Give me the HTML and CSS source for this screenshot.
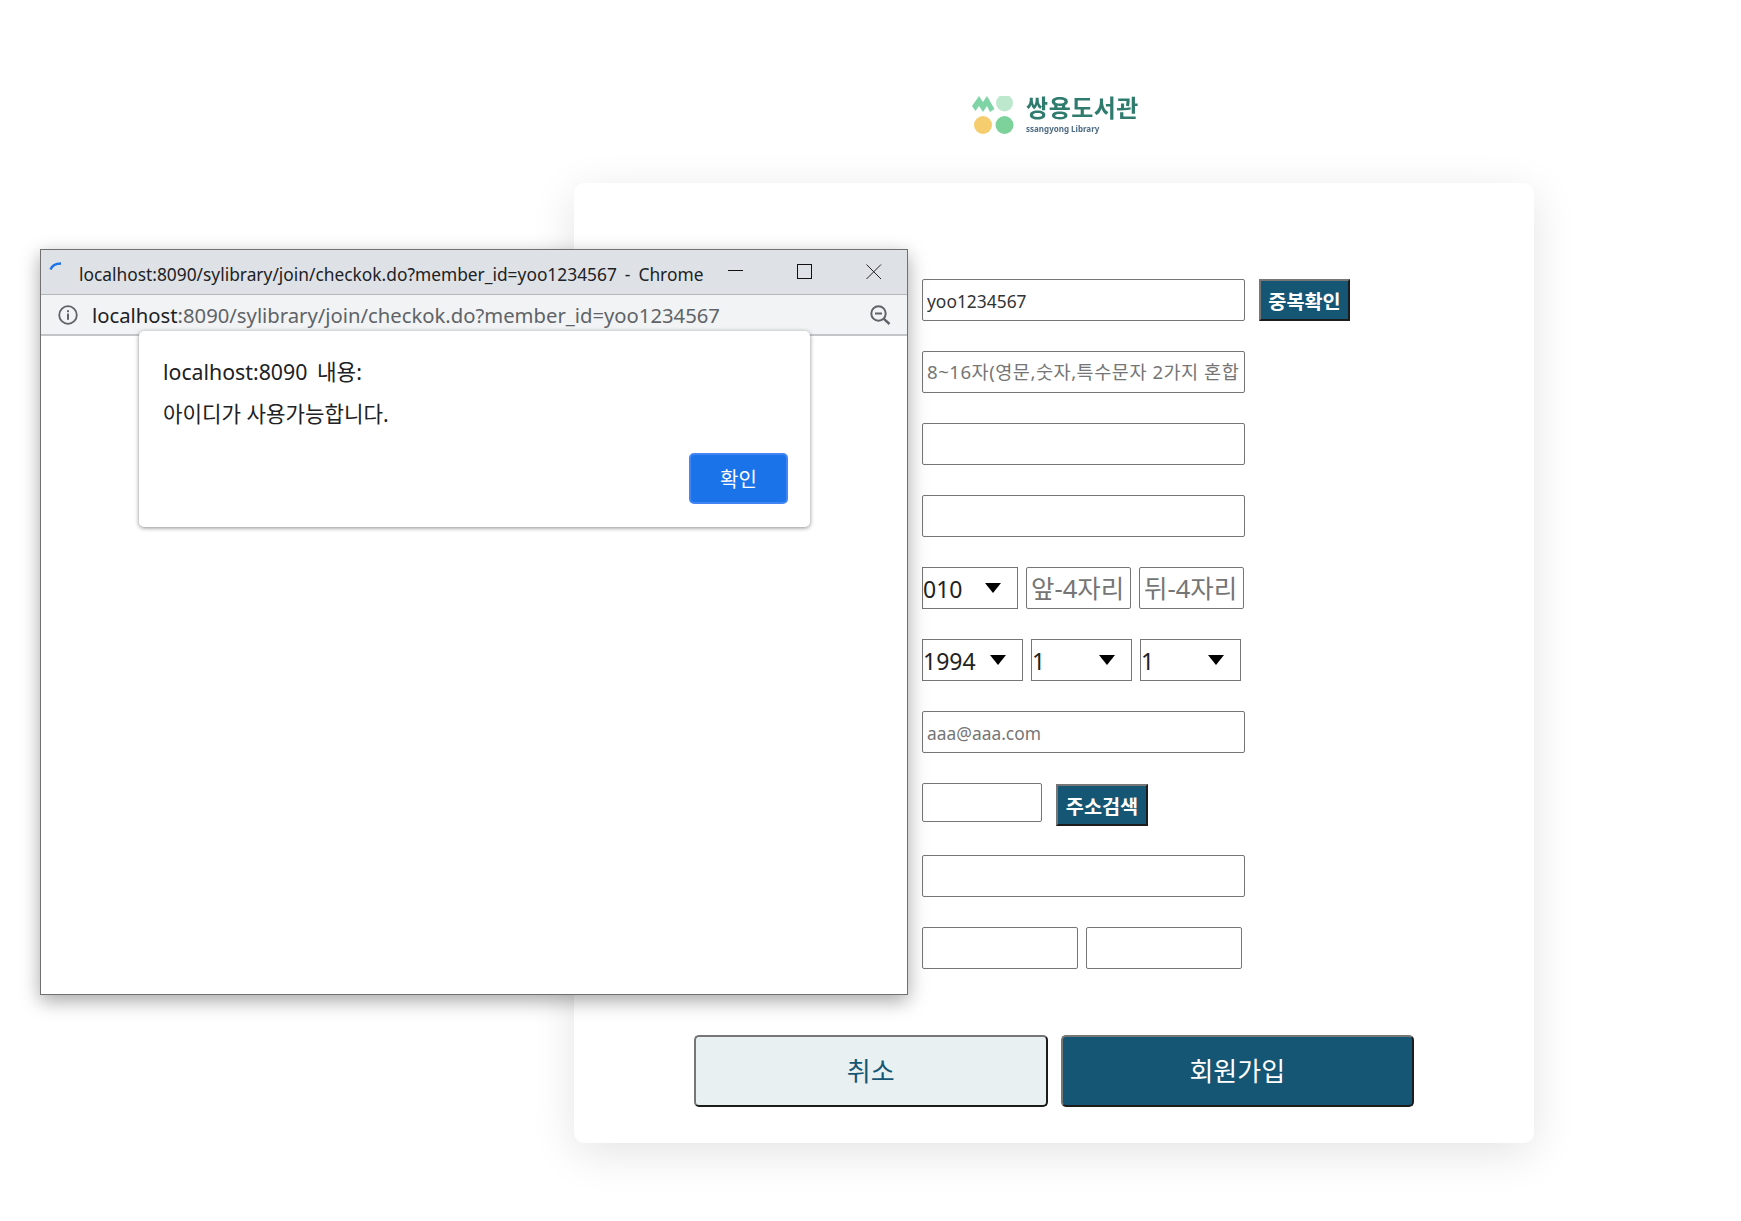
FILE: index.html
```html
<!DOCTYPE html>
<html lang="ko">
    <head>
        <meta charset="utf-8">
        <title>쌍용도서관 회원가입</title>
        <link rel="stylesheet" href="styles.css">
    </head>
    <body>
        <div class="page">
            <div class="logo">
                <svg class="logo-mark" width="54" height="46" viewBox="0 0 54 46">
                    <path d="M0 10 L7 0 L11 6 L15 0 L22.5 13 L18 16 L15 10 L11 16 L7 10 L3.5 15 Z" fill="#7fd4a6"/>
                    <circle cx="32.5" cy="7" r="8.5" fill="#bde8cd"/>
                    <circle cx="11" cy="29" r="9" fill="#f5cd6f"/>
                    <circle cx="32.5" cy="29" r="9" fill="#7dd29c"/>
                </svg>
                <div class="logo-text">
                    <div class="logo-name">쌍용도서관</div>
                    <div class="logo-sub">ssangyong Library</div>
                </div>
            </div>

            <form class="card">
                <div class="row gap-14">
                    <input class="w-full" type="text" value="yoo1234567">
                    <button class="btn-small" type="button">중복확인</button>
                </div>
                <div class="row">
                    <input class="w-full hangul-ph" type="password" placeholder="8~16자(영문,숫자,특수문자 2가지 혼합)">
                </div>
                <div class="row">
                    <input class="w-full" type="password">
                </div>
                <div class="row">
                    <input class="w-full" type="text">
                </div>
                <div class="row gap-8">
                    <div class="sel w-96"><select><option>010</option></select></div>
                    <input class="big w-105" type="text" placeholder="앞-4자리">
                    <input class="big w-105" type="text" placeholder="뒤-4자리">
                </div>
                <div class="row gap-8">
                    <div class="sel w-101"><select><option>1994</option></select></div>
                    <div class="sel w-101"><select><option>1</option></select></div>
                    <div class="sel w-101"><select><option>1</option></select></div>
                </div>
                <div class="row">
                    <input class="w-full" type="text" placeholder="aaa@aaa.com">
                </div>
                <div class="row gap-14">
                    <input class="w-120" type="text">
                    <button class="btn-small btn-addr" type="button">주소검색</button>
                </div>
                <div class="row">
                    <input class="w-full" type="text">
                </div>
                <div class="row gap-9">
                    <input class="w-155" type="text">
                    <input class="w-155" type="text">
                </div>
                <div class="actions">
                    <button class="btn-big btn-cancel" type="button">취소</button>
                    <button class="btn-big btn-join" type="button">회원가입</button>
                </div>
            </form>
        </div>

        <!-- 팝업 창 -->
        <div class="popup">
            <div class="popup-title">
                <svg class="spinner" width="14" height="9" viewBox="0 0 14 9">
                    <path d="M1.5 7.5 C3 3.5 7 1.5 12 1.5" fill="none" stroke="#1a73e8" stroke-width="2.4"/>
                </svg>
                <span class="popup-title-text">localhost:8090/sylibrary/join/checkok.do?member_id=yoo1234567&nbsp; -&nbsp; Chrome</span>
                <svg class="win-btn win-min" width="16" height="16" viewBox="0 0 16 16">
                    <path d="M0 6.5 H15" stroke="#111" stroke-width="1"/>
                </svg>
                <svg class="win-btn win-max" width="16" height="16" viewBox="0 0 16 16">
                    <rect x="0.5" y="0.5" width="14" height="14" fill="none" stroke="#111"/>
                </svg>
                <svg class="win-btn win-close" width="16" height="16" viewBox="0 0 16 16">
                    <path d="M0.5 0.5 L15 15 M15 0.5 L0.5 15" stroke="#222" stroke-width="1"/>
                </svg>
            </div>
            <div class="popup-address">
                <svg width="20" height="20" viewBox="0 0 20 20">
                    <circle cx="10" cy="10" r="8.8" fill="none" stroke="#5f6368" stroke-width="1.8"/>
                    <rect x="9" y="8.6" width="2" height="6.2" fill="#5f6368"/>
                    <rect x="9" y="5.2" width="2" height="2" fill="#5f6368"/>
                </svg>
                <span class="popup-url"><b>localhost</b>:8090/sylibrary/join/checkok.do?member_id=yoo1234567</span>
                <svg class="zoom-icon" width="21" height="20" viewBox="0 0 21 20">
                    <circle cx="8.5" cy="8.5" r="7.2" fill="none" stroke="#5f6368" stroke-width="2"/>
                    <path d="M5 8.5 H12" stroke="#5f6368" stroke-width="2"/>
                    <path d="M13.6 13.6 L19.5 19" stroke="#5f6368" stroke-width="2.4"/>
                </svg>
            </div>
            <div class="popup-body"></div>

            <div class="dialog">
                <div class="dialog-title">localhost:8090 내용:</div>
                <div class="dialog-msg">아이디가 사용가능합니다.</div>
                <div class="dialog-foot">
                    <button class="btn-ok" type="button">확인</button>
                </div>
            </div>
        </div>
    </body>
</html>
```

FILE: styles.css
```css
*{
    box-sizing: border-box;
    font-family: "Noto Sans", "Noto Sans CJK KR", sans-serif;
}
body{
    margin: 0;
    background-color: #fff;
}
.page{
    width: 960px;
    margin-left: 574px;
    padding-top: 96px;
    padding-bottom: 78px;
}

/* 로고 */
.logo{
    display: flex;
    justify-content: center;
    height: 87px;
    margin-left: 3px;
    filter: blur(0.4px);
}
.logo-name{
    font-size: 24px;
    line-height: 24px;
    font-weight: 700;
    letter-spacing: 0.5px;
    color: #2f7b6e;
}
.logo-sub{
    font-size: 8px;
    line-height: 12px;
    margin-top: 3px;
    font-weight: 700;
    color: #4d6b82;
}

/* 폼 */
.card{
    height: 960px;
    padding: 96px 0 36px 348px;
    background-color: #fff;
    border-radius: 10px;
    box-shadow: 0 10px 45px rgba(0, 0, 0, .11);
}
.row{
    display: flex;
    align-items: flex-start;
    gap: 15px;
    height: 42px;
    margin-bottom: 30px;
}
.gap-8{ gap: 8px; }
.gap-9{ gap: 8.5px; }
.gap-14{ gap: 14px; }

input{
    height: 42px;
    padding: 2px 4px 0;
    font-size: 17.4px;
    color: #333;
    background-color: #fff;
    border: 1px solid #767676;
    border-radius: 2px;
    outline: none;
}
input::placeholder{
    color: #757575;
}
input.hangul-ph{
    padding-top: 0;
}
input.hangul-ph::placeholder{
    font-size: 18.6px;
    letter-spacing: 0.5px;
}
input.big{
    padding-top: 0;
    font-size: 25.5px;
}
.w-full{ width: 323px; }
.w-96{ width: 96px; }
.w-101{ width: 101px; }
.w-105{ width: 105px; }
.w-120{ width: 120px; height: 39px; }
.w-155{ width: 155.5px; }

.sel{
    position: relative;
    height: 42px;
}
.sel::after{
    content: "";
    position: absolute;
    top: 16px;
    right: 17px;
    border-top: 10px solid #000;
    border-left: 8.5px solid transparent;
    border-right: 8.5px solid transparent;
}
select{
    display: block;
    width: 100%;
    height: 42px;
    padding: 2px 0 0;
    font-size: 23px;
    color: #222;
    background-color: #fff;
    border: 1px solid #767676;
    border-radius: 0;
    appearance: none;
    -webkit-appearance: none;
}

.btn-small{
    width: 91px;
    height: 42px;
    padding: 0;
    font-size: 19.7px;
    font-weight: 700;
    color: #fff;
    background-color: #155674;
    border: 2px solid;
    border-color: #767676 #1c1c1c #1c1c1c #767676;
}
.btn-addr{
    width: 92px;
    margin-top: 1px;
}

.actions{
    display: flex;
    gap: 13px;
    margin: 66px 0 0 -228px;
}
.btn-big{
    width: 353.5px;
    height: 72px;
    padding: 0 0 2px;
    font-size: 26px;
    border: 2px solid;
    border-color: #767676 #1c1c1c #1c1c1c #767676;
    border-radius: 5px;
}
.btn-cancel{
    color: #155674;
    background-color: #e8f0f2;
}
.btn-join{
    color: #fff;
    background-color: #155674;
}

/* 팝업 창 */
.popup{
    position: absolute;
    top: 249px;
    left: 40px;
    width: 868px;
    height: 746px;
    display: flex;
    flex-direction: column;
    background-color: #fff;
    border: 1px solid #707070;
    box-shadow: 0 6px 18px rgba(0, 0, 0, .35);
}
.popup-title{
    display: flex;
    align-items: center;
    flex: none;
    height: 45px;
    background-color: #dee1e6;
    border-bottom: 1px solid #b4b6ba;
}
.spinner{
    flex: none;
    margin: -12px 0 0 8px;
}
.popup-title-text{
    flex: none;
    width: 640px;
    margin: 3px 0 0 16px;
    font-size: 17.35px;
    word-spacing: -0.5px;
    color: #202124;
    white-space: nowrap;
}
.win-btn{
    flex: none;
}
.win-min{ margin-left: 9px; }
.win-max{ margin-left: 53px; }
.win-close{ margin-left: 53px; }

.popup-address{
    display: flex;
    align-items: center;
    flex: none;
    height: 41px;
    padding-left: 17px;
    background-color: #f1f3f4;
    border-bottom: 2px solid #c4c5c8;
}
.popup-url{
    flex: none;
    width: 778px;
    margin: 1px 0 0 14px;
    font-size: 20.25px;
    color: #5f6368;
    white-space: nowrap;
}
.popup-url b{
    font-weight: 400;
    color: #202124;
}
.zoom-icon{
    flex: none;
}
.popup-body{
    flex: 1;
}

/* 알림창 */
.dialog{
    position: absolute;
    top: 81px;
    left: 98px;
    width: 671px;
    height: 196px;
    padding: 27px 22px 22px 24px;
    background-color: #fff;
    border-radius: 5px;
    box-shadow: 0 1px 4px rgba(60, 64, 67, .6);
}
.dialog-title{
    font-size: 21.3px;
    word-spacing: 4px;
    line-height: 28px;
    color: #202124;
}
.dialog-msg{
    margin-top: 14px;
    font-size: 21.2px;
    line-height: 28px;
    color: #202124;
}
.dialog-foot{
    display: flex;
    justify-content: flex-end;
    margin-top: 25px;
}
.btn-ok{
    width: 99px;
    height: 51px;
    padding: 0;
    font-size: 20px;
    color: #fff;
    background-color: #1a73e8;
    border: 2px solid #4285f4;
    border-radius: 5px;
}
```
